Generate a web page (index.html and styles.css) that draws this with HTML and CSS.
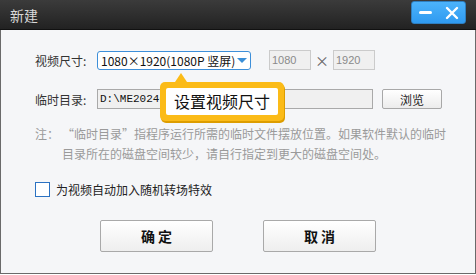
FILE: index.html
```html
<!DOCTYPE html>
<html lang="zh-CN">
<head>
    <meta charset="UTF-8">
    <title>新建</title>
    <link rel="stylesheet" href="styles.css">
</head>
<body>
    <div class="win">
        <div class="win_t">
            <span class="win_title">新建</span>
            <div class="win_ctrl">
                <span class="ctrl_min"></span>
                <svg class="ctrl_close" width="14" height="14" viewBox="0 0 14 14">
                    <path d="M2 2 L12 12 M12 2 L2 12" stroke="#fff" stroke-width="2.4" stroke-linecap="round"/>
                </svg>
            </div>
        </div>
        <div class="win_m">
            <div class="row">
                <label class="row_label">视频尺寸:</label>
                <div class="select">
                    <span class="select_text">1080×1920(1080P 竖屏)</span>
                    <span class="select_arrow"></span>
                </div>
                <span class="num">1080</span>
                <span class="times">×</span>
                <span class="num">1920</span>
            </div>
            <div class="row row_dir">
                <label class="row_label">临时目录:</label>
                <div class="path">D:\ME20240</div>
                <button class="browse">浏览</button>
            </div>
            <div class="note">
                <span class="note_h">注：</span>
                <span class="note_b">“临时目录”指程序运行所需的临时文件摆放位置。如果软件默认的临时目录所在的磁盘空间较少，请自行指定到更大的磁盘空间处。</span>
            </div>
            <div class="check">
                <span class="check_box"></span>
                <span>为视频自动加入随机转场特效</span>
            </div>
            <div class="win_d">
                <button class="btn">确 定</button>
                <button class="btn">取 消</button>
            </div>
            <!-- 提示气泡 -->
            <div class="tip">
                <div class="tip_in">设置视频尺寸</div>
            </div>
        </div>
    </div>
</body>
</html>
```

FILE: styles.css
```css
body {
    margin: 0;
    font-family: "Noto Sans CJK SC", "Noto Sans", sans-serif;
    font-size: 12px;
    color: #333;
}
.win {
    width: 474px;
    height: 273px;
    border: 1px solid #6a6a6a;
    border-top: 0;
    background-color: #f5f6f8;
    display: flex;
    flex-direction: column;
}
.win_t {
    height: 29px;
    margin: 0 -1px;
    background: linear-gradient(#3b3b3b, #222);
    border-bottom: 1px solid #111;
    display: flex;
    justify-content: space-between;
    align-items: flex-start;
}
.win_title {
    margin: 5px 0 0 10px;
    font-size: 14px;
    line-height: 20px;
    color: #d8d8d8;
}
.win_ctrl {
    width: 53px;
    height: 21px;
    margin: 1px 10px 0 0;
    border: 1px solid #2f7fc0;
    border-radius: 3px;
    background: linear-gradient(#4cb3fb, #2f9af0);
    display: flex;
    align-items: center;
    justify-content: space-around;
}
.ctrl_min {
    width: 13px;
    height: 3px;
    border-radius: 2px;
    background-color: #fff;
}
.win_m {
    flex: 1;
    padding: 20px 0 0 34px;
    position: relative;
}
.row {
    display: flex;
    align-items: center;
    height: 20px;
}
.row_dir {
    margin-top: 19px;
}
.row_label {
    width: 62px;
    font-size: 12px;
}
.select {
    width: 149px;
    height: 17px;
    padding-left: 3px;
    margin-right: 18px;
    border: 1px solid #3d8fd9;
    border-radius: 3px;
    background-color: #fff;
    display: flex;
    align-items: center;
    justify-content: space-between;
}
.select_text {
    font-size: 12px;
    color: #111;
    white-space: nowrap;
}
.select_arrow {
    width: 0;
    height: 0;
    margin-right: 3px;
    border-left: 5px solid transparent;
    border-right: 5px solid transparent;
    border-top: 5px solid #3a8fd8;
}
.num {
    width: 38px;
    height: 18px;
    padding-left: 2px;
    border: 1px solid #cbcbcb;
    background-color: #f0f0f0;
    font-family: "Liberation Sans", sans-serif;
    font-size: 11px;
    line-height: 18px;
    color: #8a8a8a;
}
.times {
    width: 22px;
    text-align: center;
    font-size: 14px;
    color: #666;
}
.path {
    width: 272px;
    height: 18px;
    padding-left: 2px;
    border: 1px solid #a9a9a9;
    background-color: #f0f0f0;
    font-family: "Liberation Mono", monospace;
    font-size: 11px;
    line-height: 18px;
    color: #111;
}
.browse {
    width: 60px;
    height: 20px;
    margin-left: 9px;
    padding: 0;
    border: 1px solid #a8a8a8;
    border-radius: 2px;
    background: linear-gradient(#fff, #ececec);
    font-family: inherit;
    font-size: 12px;
    color: #222;
}
.note {
    display: flex;
    margin-top: 15px;
    width: 412px;
    line-height: 20px;
    color: #9a9a9a;
}
.note_h {
    flex: none;
    width: 27px;
}
.check {
    display: flex;
    align-items: center;
    margin-top: 17px;
    font-size: 12px;
    color: #222;
}
.check_box {
    width: 13px;
    height: 13px;
    margin-right: 6px;
    border: 1px solid #2b72c2;
    background-color: #fff;
}
.win_d {
    display: flex;
    justify-content: center;
    margin: 22px 0 0 -34px;
    gap: 50px;
}
.btn {
    width: 113px;
    height: 32px;
    padding: 0;
    border: 1px solid #a9a9a9;
    border-radius: 2px;
    background: linear-gradient(#fff, #eee);
    font-family: inherit;
    font-size: 14px;
    font-weight: bold;
    color: #111;
}
.tip {
    position: absolute;
    left: 159px;
    top: 52px;
    width: 124px;
    height: 39px;
    box-sizing: border-box;
    padding: 6px;
    border-radius: 5px;
    background-color: #fbbb18;
    box-shadow: 1px 2px 0 #dd9d00;
}
.tip::before {
    content: "";
    position: absolute;
    left: 15px;
    top: -9px;
    border-left: 6px solid transparent;
    border-right: 6px solid transparent;
    border-bottom: 9px solid #fbbb18;
}
.tip_in {
    height: 27px;
    border-radius: 2px;
    background-color: #fff;
    font-size: 16px;
    line-height: 27px;
    padding-left: 8px;
    color: #111;
}
```
